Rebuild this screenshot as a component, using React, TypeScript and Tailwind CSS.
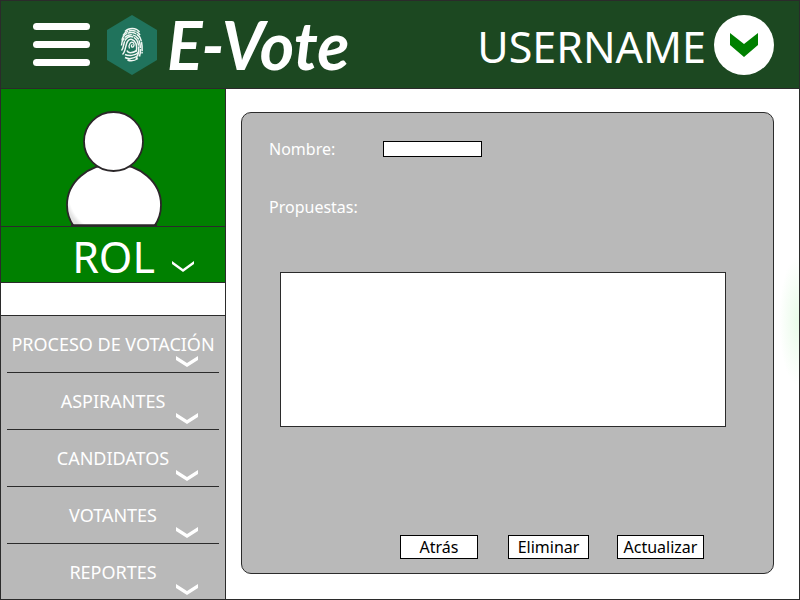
import React from "react";

const MENU = ["PROCESO DE VOTACIÓN", "ASPIRANTES", "CANDIDATOS", "VOTANTES", "REPORTES"];

function Chevron({ thin = false }: { thin?: boolean }) {
  return (
    <svg viewBox="0 0 22 11" className="h-[11px] w-[22px]" fill="#fff" aria-hidden="true">
      <path d={thin ? "M0 0L11 8L22 0V3L11 11L0 3Z" : "M0 0L11 7L22 0V4L11 11L0 4Z"} />
    </svg>
  );
}

function Logo() {
  return (
    <svg viewBox="0 0 50 60" className="h-[60px] w-[50px] shrink-0" aria-hidden="true">
      <path d="M25 0L50 15V45L25 60L0 45V15Z" fill="#20735c" />
      <g transform="translate(25 29.5)" fill="none" stroke="#f1f7f3" strokeWidth="1.5">
        <path d="M-7 -13C-3 -17 4 -17 7.500 -12.500" />
        <path d="M-9 -9C-6 -15 4 -16 8 -9.500" strokeDasharray="7 .6" />
        <path d="M-10 -4C-9 -13 3 -15 8 -7C10 -3 10.500 3 10 9" strokeDasharray="9 .6" />
        <path d="M-10.500 1C-10 -10 1 -13 6 -6C9 -1 9 7 7.500 12" strokeDasharray="8 .7" />
        <path d="M-10.500 6C-8 4 -9 -1 -6.500 -5C-3 -10 3 -8 5 -4C8 2 7 10 4 14.500" strokeDasharray="10 .6" />
        <path d="M-9.500 10C-6 7 -7 1 -4.500 -3C-2 -7 2 -5 4 -1C5 3 5 5 4 7" />
        <path d="M-2.500 4C-4 0 -1 -4 1.500 -1.500C3 1 1 4 -.5 2C-1 1 0 0 .5 .5" strokeWidth="1.300" />
        <path d="M-5 6C-4 9 0 9 5 6M-7 10C-3 12 3 11 6.500 8M-7 13C-3 15 2 14 6 11M-4.500 15.500C-1 17 3 16 6 14" />
      </g>
    </svg>
  );
}

function Avatar() {
  return (
    <svg viewBox="0 0 96 115" className="h-[115px] w-24" aria-hidden="true">
      <defs>
        <radialGradient id="bodyShade" cx="55%" cy="34%" r="58%">
          <stop offset="92%" stopColor="#fff" />
          <stop offset="100%" stopColor="#e4e4e4" />
        </radialGradient>
      </defs>
      <g stroke="#2b2729" strokeWidth="1.800">
        <ellipse cx="48" cy="94" rx="47" ry="41" fill="url(#bodyShade)" />
        <path d="M5 114.200H91" />
        <circle cx="47.500" cy="30.500" r="29.500" fill="#fff" />
      </g>
    </svg>
  );
}

function ActionButton({ className, children }: { className: string; children: React.ReactNode }) {
  return (
    <button type="button" className={`h-6 border border-black bg-white text-base leading-5 text-black ${className}`}>
      {children}
    </button>
  );
}

export default function App() {
  return (
    <div className="flex min-h-screen flex-col border border-[#2b2b2b] bg-white font-['Noto_Sans',sans-serif] text-white">
      <header className="flex h-[88px] items-center border-b border-[#2b2b2b] bg-[#1c4821] pr-[25px] pl-8">
        <button type="button" aria-label="Menú" className="flex w-[57px] flex-col gap-[11px]">
          <span className="h-[7px] rounded-full bg-white" />
          <span className="h-[7px] rounded-full bg-white" />
          <span className="h-[7px] rounded-full bg-white" />
        </button>
        <div className="ml-[17px] flex items-center gap-2.5">
          <Logo />
          <h1 className="font-['Lato',sans-serif] text-[66px] leading-[72px] font-bold whitespace-nowrap italic">E-Vote</h1>
        </div>
        <div className="ml-auto flex items-center gap-2">
          <span className="pt-1 text-[43px] leading-[52px]">USERNAME</span>
          <button type="button" aria-label="Opciones de usuario" className="flex size-[60px] items-center justify-center rounded-full bg-white">
            <svg viewBox="0 0 28 24" className="h-6 w-7" fill="#008000" aria-hidden="true">
              <path d="M0 0L14 11L28 0V12L14 24L0 12Z" />
            </svg>
          </button>
        </div>
      </header>

      <div className="flex flex-1">
        <aside className="flex w-[225px] shrink-0 flex-col border-r border-[#2b2b2b]">
          <div className="flex h-[138px] items-end justify-center border-b border-[#2b2b2b] bg-[#008000] pl-0.5">
            <Avatar />
          </div>
          <button type="button" className="flex h-14 items-center justify-end gap-[17px] border-b border-[#2b2b2b] bg-[#008000] pr-[31px]">
            <span className="pt-1 text-[43px] leading-[50px]">ROL</span>
            <span className="pt-6">
              <Chevron thin />
            </span>
          </button>
          <div className="h-[33px] border-b border-[#2b2b2b]" />
          <nav className="flex-1 bg-[#b9b9b9] px-1.5">
            <ul>
              {MENU.map((item) => (
                <li key={item} className="h-[57px] border-b border-[#2b2b2b] last:h-[55px] last:border-b-0">
                  <button type="button" className="flex w-full flex-col pt-4 text-lg leading-6">
                    <span className="w-full text-center whitespace-nowrap">{item}</span>
                    <span className="self-end pr-[21px]">
                      <Chevron />
                    </span>
                  </button>
                </li>
              ))}
            </ul>
          </nav>
        </aside>

        <main className="flex flex-1 bg-[radial-gradient(ellipse_20px_65px_at_100%_232px,#e8fbe8,#ffffff)] pt-[23px] pr-[25px] pb-[25px] pl-[15px]">
          <form className="flex flex-1 flex-col rounded-[10px] border border-[#2b2b2b] bg-[#b9b9b9] pt-6 pb-3.5 pl-[27px] text-base leading-6">
            <div className="flex items-center">
              <label htmlFor="nombre" className="w-[114px]">Nombre:</label>
              <input id="nombre" type="text" className="h-4 w-[99px] border border-black bg-white px-1 text-xs text-black" />
            </div>
            <label htmlFor="propuestas" className="mt-[34px]">Propuestas:</label>
            <textarea
              id="propuestas"
              className="mt-[53px] mr-[47px] ml-[11px] block h-[155px] resize-none border border-[#2b2b2b] bg-white p-2 text-black"
            />
            <div className="mt-auto flex justify-end pr-[69px]">
              <ActionButton className="w-[78px]">Atrás</ActionButton>
              <ActionButton className="ml-[30px] w-[81px]">Eliminar</ActionButton>
              <ActionButton className="ml-7 w-[87px]">Actualizar</ActionButton>
            </div>
          </form>
        </main>
      </div>
    </div>
  );
}
